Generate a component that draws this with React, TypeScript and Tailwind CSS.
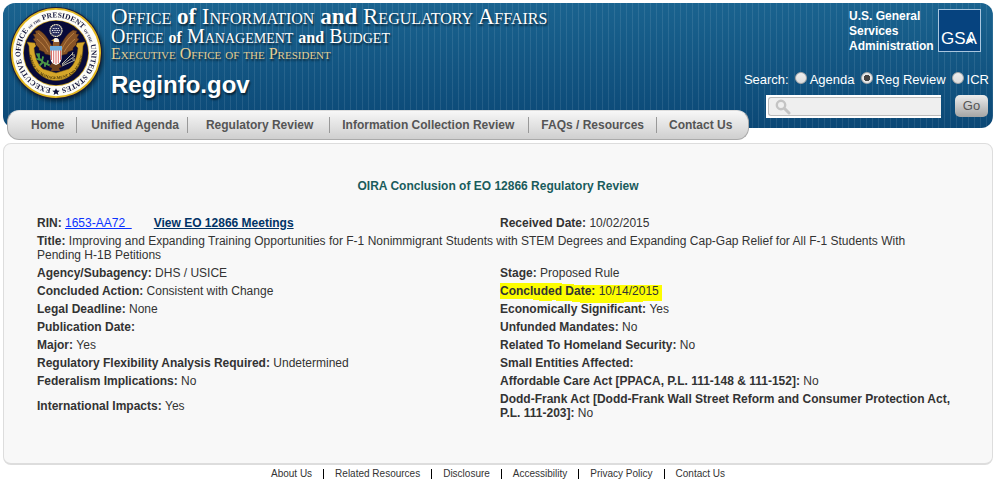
import { useState } from 'react';

interface Field {
  label: string;
  value: string;
  highlight?: boolean;
}

const NAV_ITEMS = [
  { label: 'Home', className: 'pl-[23px] pr-3' },
  { label: 'Unified Agenda', className: 'pl-3.5 pr-2' },
  { label: 'Regulatory Review', className: 'pl-4.5 pr-4' },
  { label: 'Information Collection Review', className: 'pl-3 pr-3.5' },
  { label: 'FAQs / Resources', className: 'px-3' },
  { label: 'Contact Us', className: 'pl-3 pr-4' },
];

const FOOTER_LINKS = ['About Us', 'Related Resources', 'Disclosure', 'Accessibility', 'Privacy Policy', 'Contact Us'];

const SEARCH_TYPES = ['Agenda', 'Reg Review', 'ICR'];

const REVIEW_FIELDS: [Field, Field][] = [
  [{ label: 'Agency/Subagency:', value: 'DHS / USICE' }, { label: 'Stage:', value: 'Proposed Rule' }],
  [{ label: 'Concluded Action:', value: 'Consistent with Change' }, { label: 'Concluded Date:', value: '10/14/2015', highlight: true }],
  [{ label: 'Legal Deadline:', value: 'None' }, { label: 'Economically Significant:', value: 'Yes' }],
  [{ label: 'Publication Date:', value: '' }, { label: 'Unfunded Mandates:', value: 'No' }],
  [{ label: 'Major:', value: 'Yes' }, { label: 'Related To Homeland Security:', value: 'No' }],
  [{ label: 'Regulatory Flexibility Analysis Required:', value: 'Undetermined' }, { label: 'Small Entities Affected:', value: '' }],
  [{ label: 'Federalism Implications:', value: 'No' }, { label: 'Affordable Care Act [PPACA, P.L. 111-148 & 111-152]:', value: 'No' }],
  [
    { label: 'International Impacts:', value: 'Yes' },
    { label: 'Dodd-Frank Act [Dodd-Frank Wall Street Reform and Consumer Protection Act, P.L. 111-203]:', value: 'No' },
  ],
];

function Seal() {
  return (
    <svg viewBox="0 0 94 94" className="w-[94px] h-[94px] shrink-0 drop-shadow-[1px_2px_2px_rgba(0,0,0,0.6)]" aria-hidden="true">
      <defs>
        <path id="outerRing" d="M47 82.5 A35.5 35.5 0 0 1 47 11.5 A35.5 35.5 0 0 1 47 82.5" />
        <path id="innerRing" d="M19 40 C19 62 30 73 47 73 C64 73 75 62 75 40" />
      </defs>
      <circle cx="47" cy="47" r="46" fill="#1b1d3a" />
      <circle cx="47" cy="47" r="45" fill="#e3b820" />
      <circle cx="47" cy="47" r="43.2" fill="#fdfdf8" />
      <circle cx="47" cy="47" r="33" fill="#c9a227" />
      <circle cx="47" cy="47" r="32.2" fill="#080a38" />
      <text fill="#11133a" fontFamily="Liberation Serif, serif" fontWeight="bold" fontSize="7.5">
        <textPath href="#outerRing" startOffset="5">
          EXECUTIVE OFFICE <tspan fontSize="3.8">OF THE</tspan> PRESIDENT <tspan fontSize="3.8">OF THE</tspan> UNITED STATES
        </textPath>
      </text>
      <path d="M47 82.2l1.1 2.4 2.6.2-2 1.7.7 2.5-2.4-1.4-2.4 1.4.7-2.5-2-1.7 2.6-.2z" fill="#11133a" />
      {/* scroll */}
      <path d="M18 36l8 1 1 3-2 2c1 10 4 17 9 21l13 4 13-4c5-4 8-11 9-21l-2-2 1-3 8-1-2 4c0 14-5 25-13 30-9 6-19 6-28 0-8-5-13-16-13-30z" fill="#d6a72a" stroke="#80600f" strokeWidth=".5" />
      <text fill="#42320a" fontFamily="Liberation Serif, serif" fontWeight="bold" fontSize="4">
        <textPath href="#innerRing" startOffset="50%" textAnchor="middle">OFFICE OF MANAGEMENT AND BUDGET</textPath>
      </text>
      {/* olive branch and arrows */}
      <path d="M40 59c-5-1-9-4-12-11M31 54l-3-1M34 56l-3 3M36 57l0 3M33 55l1-4M30 52l0-4M38 58l1-3" fill="none" stroke="#4d9a45" strokeWidth="1.8" strokeLinecap="round" />
      <path d="M53 59l13-9M53 60l13-6M53 58l11-11M64 46l-1 3M66 49l-3 0M66 53l-3 0" fill="none" stroke="#c9c9b0" strokeWidth=".9" />
      {/* eagle */}
      <path d="M43 57l-3 4 3 1-1 3h9l-1-3 3-1-3-4z" fill="#6c3f1d" />
      <path d="M44 41c-4-5-6-12-14-17l-4 1 1 3-3 0 2 4-2 1 3 4-1 1 4 4 0 2 5 2 1 2 8 2z" fill="#875326" stroke="#3d210f" strokeWidth=".5" />
      <path d="M50 41c4-5 6-12 14-17l4 1-1 3 3 0-2 4 2 1-3 4 1 1-4 4 0 2-5 2-1 2-8 2z" fill="#875326" stroke="#3d210f" strokeWidth=".5" />
      <path d="M29 27c6 5 10 11 13 18M28 33c5 4 8 8 11 13M65 27c-6 5-10 11-13 18M66 33c-5 4-8 8-11 13" fill="none" stroke="#c08646" strokeWidth=".9" />
      <circle cx="47" cy="24.5" r="6" fill="#2b3060" stroke="#eee8c5" strokeWidth="1.2" strokeDasharray="1.4 .4" />
      <path d="M43.8 22.5h6.4M43 24.5h8M43.8 26.5h6.4" stroke="#f4f4f4" strokeWidth="1" strokeDasharray="1 .7" />
      <path d="M43.5 40c1-3-.5-7 3.5-8 3 0 4 3 3.5 8z" fill="#8f5a2b" />
      <path d="M45 36c-1-3 0-4 2-4s3 1 3 4z" fill="#f4f1e8" />
      <path d="M45 33l-3 1.5 3 .5z" fill="#e2b53a" />
      <path d="M41.5 40h11v12c0 4-2.500 6-5.500 7-3-1-5.500-3-5.500-7z" fill="#fff" />
      <path d="M42.5 44v10M44.7 44v13M47 44v14M49.3 44v13M51.5 44v10" stroke="#d96a66" strokeWidth="1" />
      <path d="M41 40h12v4.5H41z" fill="#6caede" />
    </svg>
  );
}

function GsaLogo() {
  return (
    <svg viewBox="0 0 43 43" className="w-[43px] h-[43px] shrink-0" role="img" aria-label="GSA">
      <rect x=".5" y=".5" width="42" height="42" fill="#06437f" stroke="#a9c6df" />
      <text x="3" y="35" fill="#fff" fontFamily="Liberation Sans, Arial, sans-serif" fontSize="17">GSA</text>
      <path d="M32.5 27l1 2.6 4 .8-3.3 1.4 1 3-2.7-1.8-3.2 1.8 1.2-3-1.8-1.5 2.800-.3z" fill="#fff" />
    </svg>
  );
}

function FieldText({ field }: { field: Field }) {
  return (
    <div className="p-0.5">
      <div className={field.highlight ? 'relative isolate w-fit' : ''}>
        {field.highlight && (
          <svg viewBox="0 0 162 20" className="absolute left-0 -top-px -z-10 w-[162px] h-5" aria-hidden="true">
            <path d="M0 0h62v1h12v1h88v16h-19v1h-19v1H80v-1h-8v-1H56v-1h-4v1H39v-1H33v-1H0z" fill="#fdfd00" />
          </svg>
        )}
        <dt className="inline font-bold">{field.label}</dt> <dd className="inline">{field.value}</dd>
      </div>
    </div>
  );
}

export default function App() {
  const [searchType, setSearchType] = useState('Reg Review');
  const [query, setQuery] = useState('');

  return (
    <div className="bg-white px-[3px] pt-[3px] text-[#333] font-['Liberation_Sans',Arial,sans-serif]">
      {/* Banner */}
      <header className="flex items-start justify-between rounded-xl pb-2.5 bg-[repeating-linear-gradient(90deg,transparent_0_5px,rgba(255,255,255,0.09)_5px_6px),linear-gradient(#1a638f,#0b4876)]">
        <div className="flex items-start gap-2 pl-1.5 pt-[3px]">
          <Seal />
          <div className="text-white [text-shadow:1px_2px_2px_rgba(0,0,0,0.6)]">
            <div className="font-['Liberation_Serif',serif] whitespace-nowrap">
              <p className="text-[23px] leading-[22px] [font-variant:small-caps]">
                Office <b className="[font-variant:normal]">of</b> Information <b className="[font-variant:normal]">and</b> Regulatory Affairs
              </p>
              <p className="text-[20px] leading-4 [font-variant:small-caps]">
                Office <b className="text-[16px] [font-variant:normal]">of</b> Management <b className="text-[16px] [font-variant:normal]">and</b> Budget
              </p>
              <p className="text-[16px] leading-4 text-[#e3cf95] [font-variant:small-caps]">Executive Office of the President</p>
            </div>
            <h1 className="mt-2 text-2xl leading-[30px] font-bold">Reginfo.gov</h1>
          </div>
        </div>

        <div className="flex flex-col items-end pt-1.5 pr-1 text-white">
          <div className="flex gap-1 pr-2">
            <p className="w-[85px] text-[12px] leading-[15px] font-bold">U.S. General Services Administration</p>
            <GsaLogo />
          </div>
          <form onSubmit={(e) => e.preventDefault()}>
            <div className="mt-4 flex items-center text-[13px] leading-5 whitespace-nowrap">
              <span className="mr-1.5">Search:</span>
              {SEARCH_TYPES.map((type) => (
                <label key={type} className="flex items-center gap-[3px] mr-1.5 last:mr-0">
                  <input
                    type="radio"
                    name="searchType"
                    checked={searchType === type}
                    onChange={() => setSearchType(type)}
                    className="appearance-none -mt-1 w-3 h-3 rounded-full border border-[#aaa] bg-linear-to-b from-[#eee] to-[#ddd] checked:bg-[radial-gradient(circle,#444_0_3px,#e8e8e8_3px)]"
                  />
                  {type}
                </label>
              ))}
            </div>
            <div className="mt-[5px] flex items-start justify-end gap-3.5 pr-px">
              <label className="flex items-center w-[175px] h-[23px] bg-white pl-0.5">
                <span className="flex items-center w-full h-[19px] rounded-l-[3px] border border-r-0 border-[#bbb] bg-[#efefef] pl-1.5">
                  <svg viewBox="0 0 16 16" className="w-4 h-4 shrink-0" fill="none" stroke="#c4c4c4" aria-hidden="true">
                    <circle cx="6" cy="6" r="4.2" strokeWidth="2.4" />
                    <path d="M9.5 9.5l4.5 4.5" strokeWidth="3" strokeLinecap="round" />
                  </svg>
                  <input
                    type="text"
                    aria-label="Search"
                    value={query}
                    onChange={(e) => setQuery(e.target.value)}
                    className="w-full min-w-0 bg-transparent px-1 text-xs text-[#333] outline-none"
                  />
                </span>
              </label>
              <button type="submit" className="w-[33px] h-[22px] rounded-[5px] bg-linear-to-b from-[#eee] to-[#a5a5a5] text-[13px] text-[#555]">
                Go
              </button>
            </div>
          </form>
        </div>
      </header>

      {/* Main navigation */}
      <nav className="relative -mt-[18px] ml-1 flex w-fit items-center h-[30px] rounded-xl border border-[#aaa] border-t-[#ddd] bg-linear-to-b from-[#f7f7f7] to-[#cfcfcf] text-xs font-bold text-[#555] whitespace-nowrap">
        {NAV_ITEMS.map((item) => (
          <a key={item.label} href="#" className={`border-r border-[#999] last:border-r-0 ${item.className}`}>
            {item.label}
          </a>
        ))}
      </nav>

      {/* Review details */}
      <main className="mt-[3px] rounded-lg border border-[#ddd] border-b-2 bg-[#f8f8f8] px-[31px] pt-[35px] pb-[41px] text-xs leading-[14px]">
        <h2 className="text-center font-bold text-[#1a5c5c]">OIRA Conclusion of EO 12866 Regulatory Review</h2>
        <dl className="mt-[21px] grid grid-cols-2 items-center">
          <div className="p-0.5">
            <dt className="inline font-bold">RIN:</dt>{' '}
            <dd className="inline">
              <a href="#" className="text-[#0a32ff] underline">1653-AA72&nbsp;&nbsp;</a>
              <a href="#" className="ml-[22px] font-bold text-[#003366] underline">View EO 12866 Meetings</a>
            </dd>
          </div>
          <FieldText field={{ label: 'Received Date:', value: '10/02/2015' }} />
          <div className="col-span-2 pr-4">
            <FieldText
              field={{
                label: 'Title:',
                value:
                  'Improving and Expanding Training Opportunities for F-1 Nonimmigrant Students with STEM Degrees and Expanding Cap-Gap Relief for All F-1 Students With Pending H-1B Petitions',
              }}
            />
          </div>
          {REVIEW_FIELDS.flat().map((field) => (
            <FieldText key={field.label} field={field} />
          ))}
        </dl>
      </main>

      {/* Footer links */}
      <footer className="mt-1 flex justify-center text-[10px] leading-[10px]">
        {FOOTER_LINKS.map((link) => (
          <a key={link} href="#" className="border-r border-black px-[11px] last:border-r-0">
            {link}
          </a>
        ))}
      </footer>
    </div>
  );
}
